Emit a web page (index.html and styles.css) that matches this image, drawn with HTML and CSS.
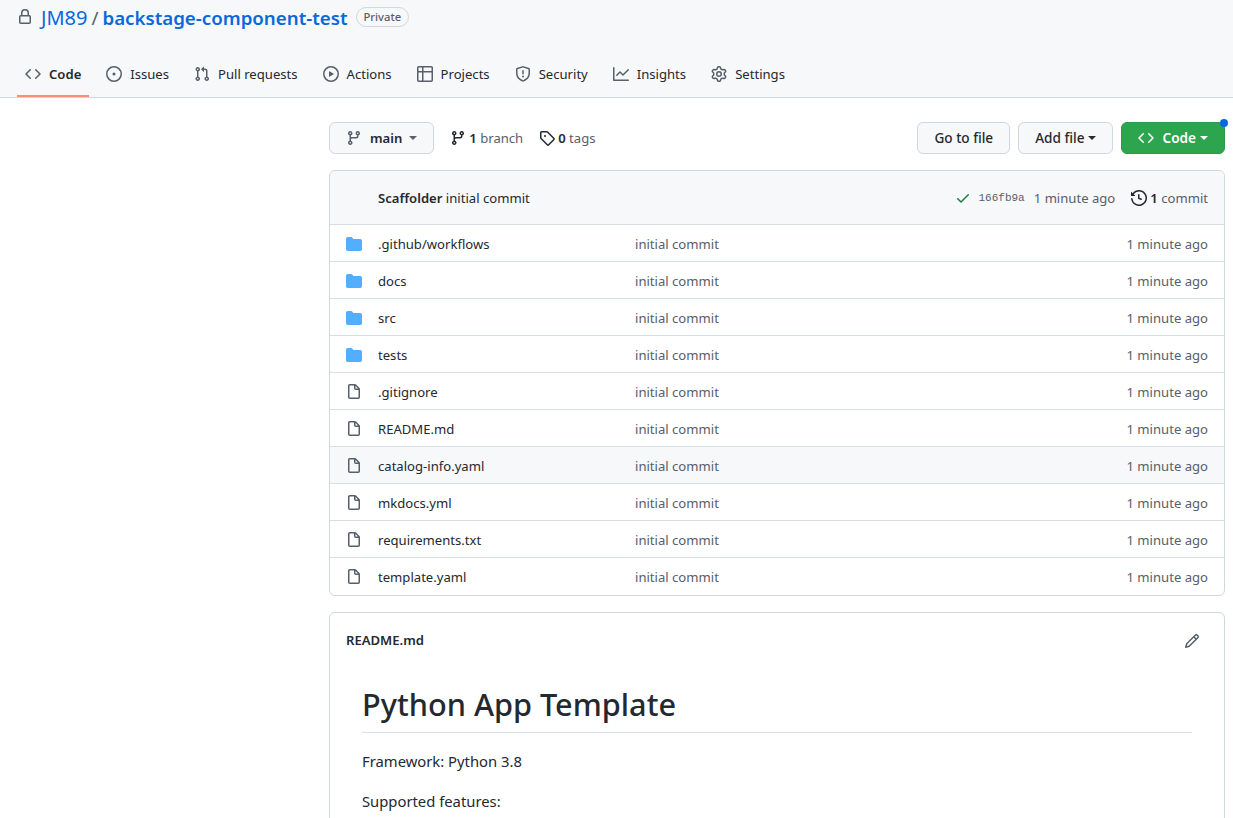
FILE: index.html
```html
<!DOCTYPE html>
<html>
<head>
    <title>JM89/backstage-component-test</title>
    <link rel="stylesheet" href="styles.css">
</head>
<body>
    <svg class="defs" width="0" height="0">
        <symbol id="i-code" viewBox="0 0 16 16"><path d="M4.72 3.22a.75.75 0 011.06 1.06L2.06 8l3.72 3.72a.75.75 0 11-1.06 1.06L.47 8.53a.75.75 0 010-1.06l4.25-4.25zm6.56 0a.75.75 0 10-1.06 1.06L13.94 8l-3.72 3.72a.75.75 0 101.06 1.06l4.25-4.25a.75.75 0 000-1.06l-4.25-4.25z"/></symbol>
        <symbol id="i-issue" viewBox="0 0 16 16"><path d="M8 9.5a1.5 1.5 0 100-3 1.5 1.5 0 000 3z"/><path fill-rule="evenodd" d="M8 0a8 8 0 100 16A8 8 0 008 0zM1.5 8a6.5 6.5 0 1113 0 6.5 6.5 0 01-13 0z"/></symbol>
        <symbol id="i-pull" viewBox="0 0 16 16"><path fill-rule="evenodd" d="M7.177 3.073L9.573.677A.25.25 0 0110 .854v4.792a.25.25 0 01-.427.177L7.177 3.427a.25.25 0 010-.354zM3.75 2.5a.75.75 0 100 1.5.75.75 0 000-1.5zm-2.25.75a2.25 2.25 0 113 2.122v5.256a2.251 2.251 0 11-1.5 0V5.372A2.25 2.25 0 011.5 3.25zM11 2.5h-1V4h1a1 1 0 011 1v5.628a2.251 2.251 0 101.5 0V5A2.5 2.5 0 0011 2.5zm1 10.25a.75.75 0 111.5 0 .75.75 0 01-1.5 0zM3.75 12a.75.75 0 100 1.5.75.75 0 000-1.5z"/></symbol>
        <symbol id="i-play" viewBox="0 0 16 16"><path fill-rule="evenodd" d="M1.5 8a6.5 6.5 0 1113 0 6.5 6.5 0 01-13 0zM8 0a8 8 0 100 16A8 8 0 008 0zM6.379 5.227A.25.25 0 006 5.442v5.117a.25.25 0 00.379.214l4.264-2.559a.25.25 0 000-.428L6.379 5.227z"/></symbol>
        <symbol id="i-table" viewBox="0 0 16 16"><path fill-rule="evenodd" d="M0 1.75C0 .784.784 0 1.75 0h12.5C15.216 0 16 .784 16 1.75v12.5A1.75 1.75 0 0114.25 16H1.75A1.75 1.75 0 010 14.25V1.75zM1.5 6.5v7.75c0 .138.112.25.25.25H5v-8H1.5zM5 5H1.5V1.75a.25.25 0 01.25-.25H5V5zm1.5 1.5v8h7.75a.25.25 0 00.25-.25V6.5h-8zm8-1.5h-8V1.5h7.75a.25.25 0 01.25.25V5z"/></symbol>
        <symbol id="i-shield" viewBox="0 0 16 16"><path fill-rule="evenodd" d="M7.467.133a1.75 1.75 0 011.066 0l5.25 1.68A1.75 1.75 0 0115 3.48V7c0 1.566-.32 3.182-1.303 4.682-.983 1.498-2.585 2.813-5.032 3.855a1.7 1.7 0 01-1.33 0c-2.447-1.042-4.049-2.357-5.032-3.855C1.32 10.182 1 8.566 1 7V3.48a1.75 1.75 0 011.217-1.667l5.25-1.68zm.61 1.429a.25.25 0 00-.153 0l-5.25 1.68a.25.25 0 00-.174.238V7c0 1.358.275 2.666 1.057 3.86.784 1.194 2.121 2.34 4.366 3.297a.2.2 0 00.154 0c2.245-.956 3.582-2.104 4.366-3.298C13.225 9.666 13.5 8.36 13.5 7V3.48a.25.25 0 00-.174-.237l-5.25-1.68zM9 10.5a1 1 0 11-2 0 1 1 0 012 0zm-.25-5.75a.75.75 0 10-1.5 0v3a.75.75 0 001.5 0v-3z"/></symbol>
        <symbol id="i-graph" viewBox="0 0 16 16"><path fill-rule="evenodd" d="M1.5 1.75a.75.75 0 00-1.5 0v12.5c0 .414.336.75.75.75h14.5a.75.75 0 000-1.5H1.5V1.75zm14.28 2.53a.75.75 0 00-1.06-1.06L10 7.94 7.53 5.47a.75.75 0 00-1.06 0L3.22 8.72a.75.75 0 001.06 1.06L7 7.06l2.47 2.47a.75.75 0 001.06 0l5.25-5.25z"/></symbol>
        <symbol id="i-gear" viewBox="0 0 16 16"><path fill-rule="evenodd" d="M7.429 1.525a6.593 6.593 0 011.142 0c.036.003.108.036.137.146l.289 1.105c.147.56.55.967.997 1.189.174.086.341.183.501.29.417.278.97.423 1.53.27l1.102-.303c.11-.03.175.016.195.046.219.31.41.641.573.989.014.031.022.11-.059.19l-.815.806c-.411.406-.562.957-.53 1.456a4.588 4.588 0 010 .582c-.032.499.119 1.05.53 1.456l.815.806c.08.08.073.159.059.19a6.494 6.494 0 01-.573.99c-.02.029-.086.074-.195.045l-1.103-.303c-.559-.153-1.112-.008-1.529.27-.16.107-.327.204-.5.29-.449.222-.851.628-.998 1.189l-.289 1.105c-.029.11-.101.143-.137.146a6.613 6.613 0 01-1.142 0c-.036-.003-.108-.037-.137-.146l-.289-1.105c-.147-.56-.55-.967-.997-1.189a4.502 4.502 0 01-.501-.29c-.417-.278-.97-.423-1.53-.27l-1.102.303c-.11.03-.175-.016-.195-.046a6.492 6.492 0 01-.573-.989c-.014-.031-.022-.11.059-.19l.815-.806c.411-.406.562-.957.53-1.456a4.587 4.587 0 010-.582c.032-.499-.119-1.05-.53-1.456l-.815-.806c-.08-.08-.073-.159-.059-.19a6.44 6.44 0 01.573-.99c.02-.029.086-.075.195-.045l1.103.303c.559.153 1.112.008 1.529-.27.16-.107.327-.204.5-.29.449-.222.851-.628.998-1.189l.289-1.105c.029-.11.101-.143.137-.146zM8 0c-.236 0-.47.01-.701.03-.743.065-1.29.615-1.458 1.261l-.29 1.106c-.017.066-.078.158-.211.224a5.994 5.994 0 00-.668.386c-.123.082-.233.09-.3.071L3.27 2.776c-.644-.177-1.392.02-1.82.63a7.977 7.977 0 00-.704 1.217c-.315.675-.111 1.422.363 1.891l.815.806c.05.048.098.147.088.294a6.084 6.084 0 000 .772c.01.147-.038.246-.088.294l-.815.806c-.474.469-.678 1.216-.363 1.891.2.428.436.835.704 1.218.428.609 1.176.806 1.82.63l1.103-.303c.066-.019.176-.011.299.071.213.143.436.272.668.386.133.066.194.158.212.224l.289 1.106c.169.646.715 1.196 1.458 1.26a8.094 8.094 0 001.402 0c.743-.064 1.29-.614 1.458-1.26l.29-1.106c.017-.066.078-.158.211-.224a5.98 5.98 0 00.668-.386c.123-.082.233-.09.3-.071l1.102.302c.644.177 1.392-.02 1.82-.63.268-.382.505-.789.704-1.217.315-.675.111-1.422-.364-1.891l-.814-.806c-.05-.048-.098-.147-.088-.294a6.1 6.1 0 000-.772c-.01-.147.039-.246.088-.294l.814-.806c.475-.469.679-1.216.364-1.891a7.992 7.992 0 00-.704-1.218c-.428-.609-1.176-.806-1.82-.63l-1.103.303c-.066.019-.176.011-.299-.071a5.991 5.991 0 00-.668-.386c-.133-.066-.194-.158-.212-.224L10.16 1.29C9.99.645 9.444.095 8.701.031A8.094 8.094 0 008 0zm1.5 8a1.5 1.5 0 11-3 0 1.5 1.5 0 013 0zM11 8a3 3 0 11-6 0 3 3 0 016 0z"/></symbol>
        <symbol id="i-lock" viewBox="0 0 16 16"><path fill-rule="evenodd" d="M4 4v2h-.25A1.75 1.75 0 002 7.75v5.5c0 .966.784 1.75 1.75 1.75h8.5A1.75 1.75 0 0014 13.25v-5.5A1.75 1.75 0 0012.25 6H12V4a4 4 0 10-8 0zm6.5 2V4a2.5 2.5 0 00-5 0v2h5zM12 7.5h.25a.25.25 0 01.25.25v5.5a.25.25 0 01-.25.25h-8.5a.25.25 0 01-.25-.25v-5.5a.25.25 0 01.25-.25H12z"/></symbol>
        <symbol id="i-branch" viewBox="0 0 16 16"><path fill-rule="evenodd" d="M11.75 2.5a.75.75 0 100 1.5.75.75 0 000-1.5zm-2.25.75a2.25 2.25 0 113 2.122V6A2.5 2.5 0 0110 8.5H6a1 1 0 00-1 1v1.128a2.251 2.251 0 11-1.5 0V5.372a2.25 2.25 0 111.5 0v1.836A2.492 2.492 0 016 7h4a1 1 0 001-1v-.628A2.25 2.25 0 019.5 3.25zM4.25 12a.75.75 0 100 1.5.75.75 0 000-1.5zM3.5 3.25a.75.75 0 111.5 0 .75.75 0 01-1.5 0z"/></symbol>
        <symbol id="i-tag" viewBox="0 0 16 16"><path fill-rule="evenodd" d="M2.5 7.775V2.75a.25.25 0 01.25-.25h5.025a.25.25 0 01.177.073l6.25 6.25a.25.25 0 010 .354l-5.025 5.025a.25.25 0 01-.354 0l-6.25-6.25a.25.25 0 01-.073-.177zm-1.5 0V2.75C1 1.784 1.784 1 2.75 1h5.025c.464 0 .91.184 1.238.513l6.25 6.25a1.75 1.75 0 010 2.474l-5.026 5.026a1.75 1.75 0 01-2.474 0l-6.25-6.25A1.75 1.75 0 011 7.775zM6 5a1 1 0 100 2 1 1 0 000-2z"/></symbol>
        <symbol id="i-check" viewBox="0 0 16 16"><path fill-rule="evenodd" d="M13.78 4.22a.75.75 0 010 1.06l-7.25 7.25a.75.75 0 01-1.06 0L2.22 9.28a.75.75 0 011.06-1.06L6 10.94l6.72-6.72a.75.75 0 011.06 0z"/></symbol>
        <symbol id="i-history" viewBox="0 0 16 16"><path fill-rule="evenodd" d="M1.643 3.143L.427 1.927A.25.25 0 000 2.104V5.75c0 .138.112.25.25.25h3.646a.25.25 0 00.177-.427L2.715 4.215a6.5 6.5 0 11-1.18 4.458.75.75 0 10-1.493.154 8.001 8.001 0 101.6-5.684zM7.75 4a.75.75 0 01.75.75v2.992l2.028.812a.75.75 0 01-.557 1.392l-2.5-1A.75.75 0 017 8.25v-3.5A.75.75 0 017.75 4z"/></symbol>
        <symbol id="i-folder" viewBox="0 0 16 16"><path d="M1.75 1A1.75 1.75 0 000 2.75v10.5C0 14.216.784 15 1.75 15h12.5A1.75 1.75 0 0016 13.25v-8.5A1.75 1.75 0 0014.25 3H7.5a.25.25 0 01-.2-.1l-.9-1.2C6.07 1.26 5.55 1 5 1H1.75z"/></symbol>
        <symbol id="i-file" viewBox="0 0 16 16"><path fill-rule="evenodd" d="M3.75 1.5a.25.25 0 00-.25.25v11.5c0 .138.112.25.25.25h8.5a.25.25 0 00.25-.25V6H9.75A1.75 1.75 0 018 4.25V1.5H3.75zm5.75.56v2.19c0 .138.112.25.25.25h2.19L9.5 2.06zM2 1.75C2 .784 2.784 0 3.75 0h5.086c.464 0 .909.184 1.237.513l3.414 3.414c.329.328.513.773.513 1.237v8.086A1.75 1.75 0 0112.25 15h-8.5A1.75 1.75 0 012 13.25V1.75z"/></symbol>
        <symbol id="i-pencil" viewBox="0 0 16 16"><path fill-rule="evenodd" d="M11.013 1.427a1.75 1.75 0 012.474 0l1.086 1.086a1.75 1.75 0 010 2.474l-8.61 8.61c-.21.21-.47.364-.756.445l-3.251.93a.75.75 0 01-.927-.928l.929-3.25a1.75 1.75 0 01.445-.758l8.61-8.61zm1.414 1.06a.25.25 0 00-.354 0L10.811 3.75l1.439 1.44 1.263-1.263a.25.25 0 000-.354l-1.086-1.086zM11.189 6.25L9.75 4.81l-6.286 6.287a.25.25 0 00-.064.108l-.558 1.953 1.953-.558a.249.249 0 00.108-.064l6.286-6.286z"/></symbol>
    </svg>

    <header class="repo-head">
        <div class="repo-title">
            <svg class="icon lock"><use href="#i-lock"/></svg>
            <a class="owner" href="#">JM89</a>
            <span class="slash">/</span>
            <a class="repo-name" href="#">backstage-component-test</a>
            <span class="label">Private</span>
        </div>
        <nav class="tabs">
            <a class="tab selected" href="#"><svg class="icon"><use href="#i-code"/></svg>Code</a>
            <a class="tab" href="#"><svg class="icon"><use href="#i-issue"/></svg>Issues</a>
            <a class="tab" href="#"><svg class="icon"><use href="#i-pull"/></svg>Pull requests</a>
            <a class="tab" href="#"><svg class="icon"><use href="#i-play"/></svg>Actions</a>
            <a class="tab" href="#"><svg class="icon"><use href="#i-table"/></svg>Projects</a>
            <a class="tab" href="#"><svg class="icon"><use href="#i-shield"/></svg>Security</a>
            <a class="tab" href="#"><svg class="icon"><use href="#i-graph"/></svg>Insights</a>
            <a class="tab" href="#"><svg class="icon"><use href="#i-gear"/></svg>Settings</a>
        </nav>
    </header>

    <main class="content">
        <div class="toolbar">
            <button class="btn btn-branch"><svg class="icon"><use href="#i-branch"/></svg><b>main</b><i class="caret"></i></button>
            <a class="count first" href="#"><svg class="icon dark"><use href="#i-branch"/></svg><span><b>1</b> branch</span></a>
            <a class="count" href="#"><svg class="icon dark"><use href="#i-tag"/></svg><span><b>0</b> tags</span></a>
            <button class="btn push-right">Go to file</button>
            <button class="btn">Add file<i class="caret"></i></button>
            <button class="btn btn-green"><svg class="icon"><use href="#i-code"/></svg>Code<i class="caret"></i><span class="dot"></span></button>
        </div>

        <div class="box files">
            <div class="commit-row">
                <span><b class="author">Scaffolder</b> initial commit</span>
                <svg class="icon check"><use href="#i-check"/></svg>
                <span class="sha">166fb9a</span>
                <span class="muted">1 minute ago</span>
                <span class="history"><svg class="icon dark"><use href="#i-history"/></svg><span><b>1</b> <span class="muted">commit</span></span></span>
            </div>
            <div class="file-row"><svg class="icon folder"><use href="#i-folder"/></svg><span class="name">.github/workflows</span><span class="msg">initial commit</span><span class="age">1 minute ago</span></div>
            <div class="file-row"><svg class="icon folder"><use href="#i-folder"/></svg><span class="name">docs</span><span class="msg">initial commit</span><span class="age">1 minute ago</span></div>
            <div class="file-row"><svg class="icon folder"><use href="#i-folder"/></svg><span class="name">src</span><span class="msg">initial commit</span><span class="age">1 minute ago</span></div>
            <div class="file-row"><svg class="icon folder"><use href="#i-folder"/></svg><span class="name">tests</span><span class="msg">initial commit</span><span class="age">1 minute ago</span></div>
            <div class="file-row"><svg class="icon"><use href="#i-file"/></svg><span class="name">.gitignore</span><span class="msg">initial commit</span><span class="age">1 minute ago</span></div>
            <div class="file-row"><svg class="icon"><use href="#i-file"/></svg><span class="name">README.md</span><span class="msg">initial commit</span><span class="age">1 minute ago</span></div>
            <div class="file-row hover"><svg class="icon"><use href="#i-file"/></svg><span class="name">catalog-info.yaml</span><span class="msg">initial commit</span><span class="age">1 minute ago</span></div>
            <div class="file-row"><svg class="icon"><use href="#i-file"/></svg><span class="name">mkdocs.yml</span><span class="msg">initial commit</span><span class="age">1 minute ago</span></div>
            <div class="file-row"><svg class="icon"><use href="#i-file"/></svg><span class="name">requirements.txt</span><span class="msg">initial commit</span><span class="age">1 minute ago</span></div>
            <div class="file-row"><svg class="icon"><use href="#i-file"/></svg><span class="name">template.yaml</span><span class="msg">initial commit</span><span class="age">1 minute ago</span></div>
        </div>

        <div class="box readme">
            <div class="readme-head">
                <b>README.md</b>
                <svg class="icon"><use href="#i-pencil"/></svg>
            </div>
            <article class="markdown">
                <h1>Python App Template</h1>
                <p>Framework: Python 3.8</p>
                <p>Supported features:</p>
            </article>
        </div>
    </main>
</body>
</html>
```

FILE: styles.css
```css
html, body { margin: 0; height: 818px; overflow: hidden; }
body { font-family: "Noto Sans", Arial, sans-serif; font-size: 13.1px; line-height: 20px; color: #24292f; background: #fff; }
a { color: inherit; text-decoration: none; }
b { font-weight: 600; }
.defs { display: block; height: 0; }
.icon { width: 16px; height: 16px; fill: #57606a; flex: none; display: block; }
.icon.dark { fill: #24292f; }
.muted { color: #57606a; }

.repo-head { height: 97px; background: #f6f8fa; border-bottom: 1px solid #d0d7de; display: flex; flex-direction: column; justify-content: space-between; }
.repo-title { display: flex; align-items: center; height: 20px; padding: 8px 0 0 17px; font-size: 18.7px; line-height: 20px; color: #0969da; }
.lock { margin-top: -2px; }
.owner { margin-left: 8px; font-size: 20px; font-weight: 400; }
.slash { margin: 0 4px; color: #57606a; }
.repo-name { font-weight: 600; }
.label { margin: -2px 0 0 8px; padding: 0 7px; font-size: 11.2px; line-height: 18px; font-weight: 500; color: #57606a; border: 1px solid #d0d7de; border-radius: 2em; }

.tabs { display: flex; gap: 9px; padding-left: 17px; height: 48px; }
.tab { display: flex; align-items: center; gap: 8px; padding: 4px 8px 0; height: 42px; border-bottom: 2px solid transparent; margin-bottom: -1px; }
.tab.selected { font-weight: 600; border-bottom-color: #fd8c73; }

.content { margin: 24px 8px 0 329px; }
.toolbar { display: flex; align-items: center; gap: 8px; height: 32px; margin-bottom: 16px; }
.btn { position: relative; display: flex; align-items: center; height: 32px; padding: 0 16px; font: inherit; font-size: 13.6px; font-weight: 500; color: #24292f; background: #f6f8fa; border: 1px solid #d0d7de; border-radius: 6px; }
.btn-branch { font-size: 13.1px; }
.btn-branch .icon { margin-right: 8px; }
.btn-branch b { font-weight: 600; }
.btn-green { color: #fff; font-weight: 600; background: #2da44e; border-color: #2a9a49; }
.btn-green .icon { fill: #fff; margin-right: 8px; }
.caret { display: inline-block; margin-left: 4px; border-top: 4px solid currentColor; border-left: 4px solid transparent; border-right: 4px solid transparent; }
.btn-branch .caret { margin-left: 7px; color: #57606a; }
.dot { position: absolute; top: -4px; right: -4px; width: 8px; height: 8px; border-radius: 50%; background: #0969da; }
.push-right { margin-left: auto; }
.count { display: flex; align-items: center; gap: 3px; color: #57606a; }
.count b { color: #24292f; }
.count.first { margin-left: 8px; margin-right: 8px; }

.box { border: 1px solid #d0d7de; border-radius: 6px; }
.commit-row { display: flex; align-items: center; height: 53px; padding: 0 16px 0 48px; background: #f6f8fa; border-radius: 6px 6px 0 0; }
.commit-row > span:first-child { margin-right: auto; }
.author { font-weight: 600; }
.check { fill: #1a7f37; margin-right: 8px; }
.sha { font-family: "Liberation Mono", monospace; font-size: 11px; color: #57606a; margin-right: 9px; }
.history { display: flex; align-items: center; gap: 3px; margin-left: 16px; }

.file-row { display: flex; align-items: center; height: 34px; padding: 2px 16px 0; border-top: 1px solid #d8dee4; }
.file-row:last-child { padding-bottom: 1px; }
.file-row .icon { margin-right: 16px; }
.file-row .folder { fill: #54aeff; }
.file-row.hover { background: #f6f8fa; }
.name { width: 257px; flex: none; }
.msg { flex: auto; color: #57606a; }
.age { color: #57606a; }

.readme { margin-top: 16px; height: 300px; }
.readme-head { display: flex; align-items: center; justify-content: space-between; height: 55px; padding: 0 24px 0 16px; }
.readme-head b { margin-top: -2px; }
.markdown { padding: 16px 32px 0; }
.markdown h1 { margin: 0 0 16px; padding-bottom: 8px; font-size: 30.7px; line-height: 40px; font-weight: 500; border-bottom: 1px solid #d8dee4; }
.markdown p { margin: 0 0 16px; font-size: 14.8px; line-height: 24px; }
```
